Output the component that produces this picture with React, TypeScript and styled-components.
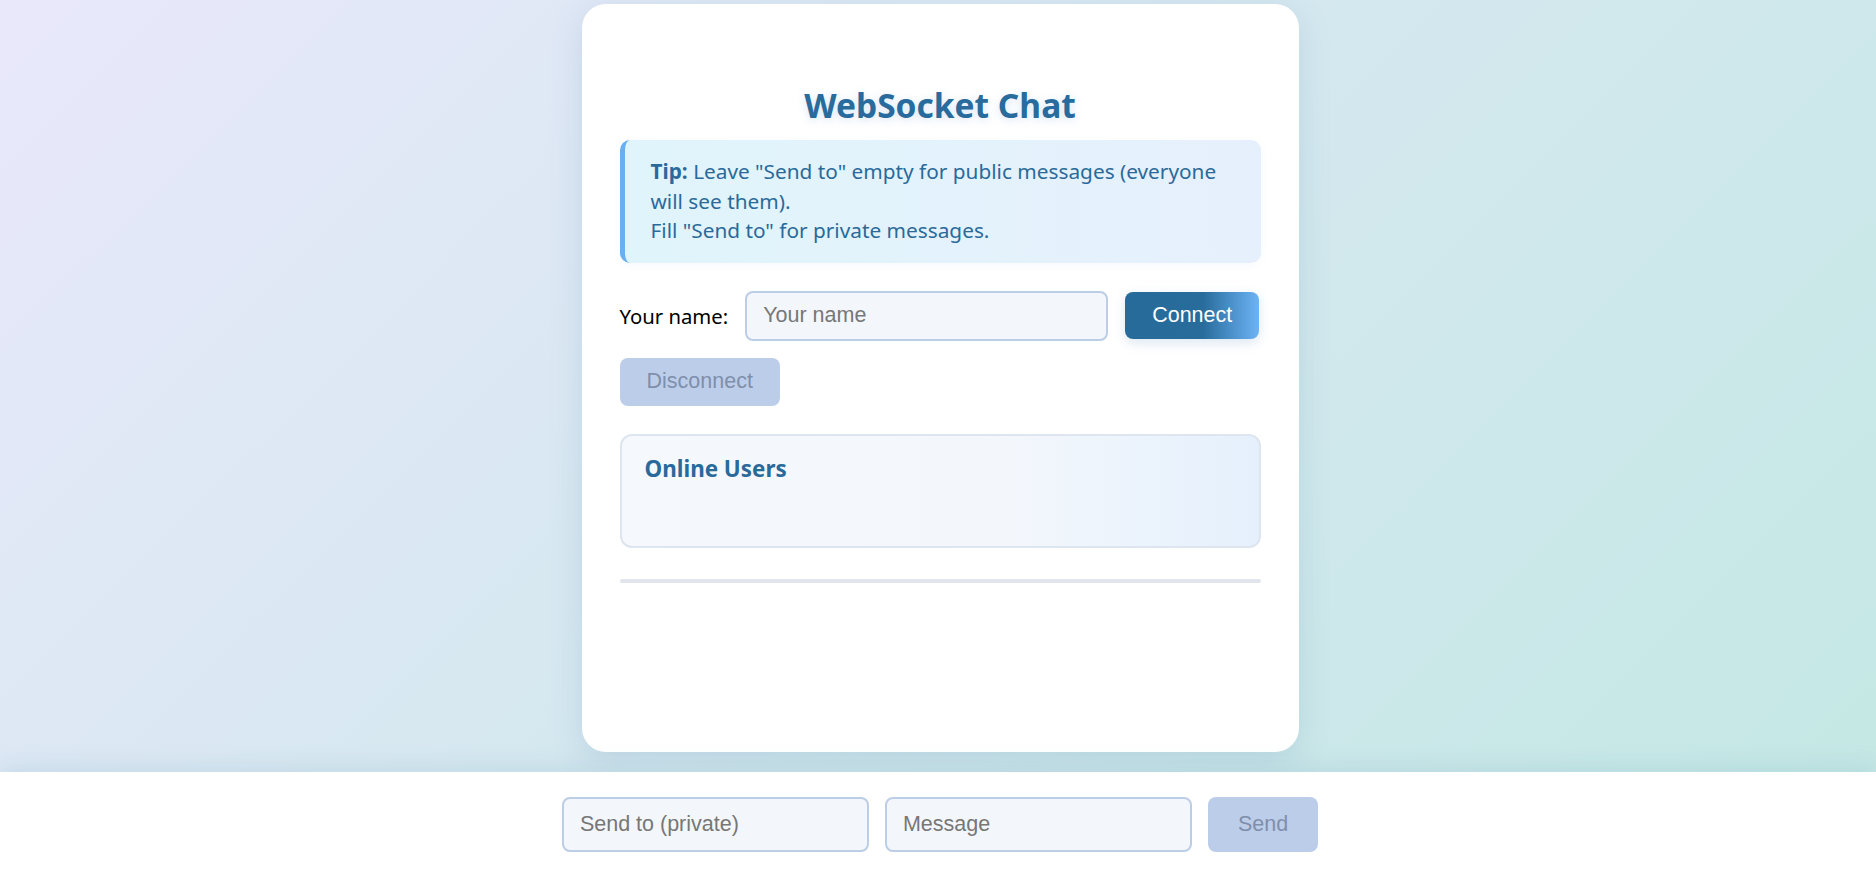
import React from "react";
import styled, { createGlobalStyle } from "styled-components";

const GlobalStyle = createGlobalStyle`
  * { box-sizing: border-box; }
  html, body { margin: 0; padding: 0; height: 100%; }
  body {
    font-family: "Segoe UI", "Noto Sans", sans-serif;
    background: linear-gradient(135deg, #e9e8fb 0%, #d6e8f0 45%, #c3e8e4 100%);
    overflow: hidden;
  }
  #root { height: 100%; }
`;

const Page = styled.div`
  height: 100vh;
  display: flex;
  flex-direction: column;
`;

const Main = styled.main`
  flex: 1;
  display: flex;
  justify-content: center;
  padding: 4px 0 20px 4px;
  min-height: 0;
`;

const Card = styled.section`
  width: 717px;
  background: #fff;
  border-radius: 24px;
  box-shadow: 0 8px 32px rgba(80, 130, 170, 0.18);
  padding: 0 38px;
  display: flex;
  flex-direction: column;
`;

const Title = styled.h1`
  margin: 82px 0 16px;
  text-align: center;
  font-family: "Segoe UI", "Noto Sans", sans-serif;
  font-weight: 700;
  font-size: 33.5px;
  line-height: 38px;
  color: #286b9c;
  text-shadow: 0 2px 8px rgba(100, 150, 220, 0.25);
`;

const Tip = styled.div`
  background: linear-gradient(90deg, #e0f4fb 0%, #e6f0fc 100%);
  border-left: 5px solid #6ab0f0;
  border-radius: 10px;
  padding: 17px 20px 17px 26px;
  color: #2a6a9a;
  font-size: 20.8px;
  line-height: 29.5px;
  box-shadow: 0 2px 8px rgba(100, 150, 200, 0.06);

  strong { font-weight: 700; }
`;

const Controls = styled.div`
  margin-top: 28px;
  display: flex;
  flex-wrap: wrap;
  align-items: center;
  column-gap: 17px;
  row-gap: 17px;
`;

const Label = styled.label`
  font-family: "Segoe UI", "Noto Sans", sans-serif;
  font-size: 20.3px;
  color: #000;
`;

const Input = styled.input<{ $w: number; $h: number }>`
  width: ${(p) => p.$w}px;
  height: ${(p) => p.$h}px;
  border: 2px solid #bccde6;
  border-radius: 8px;
  background: #f3f6fb;
  padding: 0 16px;
  font-family: "Liberation Sans", Arial, sans-serif;
  font-size: 21.5px;
  color: #333;
  outline: none;
  &::placeholder { color: #777; }
`;

const Button = styled.button<{ $primary?: boolean; $h: number; $px?: number }>`
  height: ${(p) => p.$h}px;
  padding: 0 ${(p) => p.$px ?? 27}px;
  border: none;
  border-radius: 8px;
  font-family: "Liberation Sans", Arial, sans-serif;
  font-size: 21.5px;
  cursor: pointer;
  color: ${(p) => (p.$primary ? "#ffffff" : "#7f8fab")};
  background: ${(p) =>
    p.$primary
      ? "linear-gradient(90deg, #276b9b 0%, #286c9c 58%, #6db3f5 100%)"
      : "#bccdea"};
  box-shadow: ${(p) => (p.$primary ? "0 4px 12px rgba(60, 120, 180, 0.18)" : "none")};
`;

const Users = styled.div`
  margin-top: 28px;
  height: 114px;
  border: 2px solid #dde5ef;
  border-radius: 12px;
  background: linear-gradient(90deg, #f5f8fc 0%, #f3f7fc 60%, #e5f0fc 100%);
  padding: 18px 23px;
`;

const UsersTitle = styled.h3`
  margin: 0;
  font-size: 22.4px;
  line-height: 30px;
  font-weight: 700;
  color: #2a6a9a;
`;

const Divider = styled.hr`
  margin: 31px 0 0;
  border: none;
  height: 4px;
  border-radius: 2px;
  background: #e1e6ec;
`;

const BottomBar = styled.footer`
  height: 106px;
  flex-shrink: 0;
  background: #fff;
  box-shadow: 0 -6px 20px rgba(110, 160, 190, 0.18);
  display: flex;
  justify-content: center;
  align-items: flex-start;
  gap: 16px;
  padding: 25px 0 0 4px;
`;

export default function App() {
  return (
    <>
      <GlobalStyle />
      <Page>
        <Main>
          <Card>
            <Title>WebSocket Chat</Title>
            <Tip>
              <strong>Tip:</strong> Leave "Send to" empty for public messages (everyone
              <br />
              will see them).
              <br />
              Fill "Send to" for private messages.
            </Tip>
            <Controls>
              <Label>Your name:</Label>
              <Input $w={363} $h={50} placeholder="Your name" />
              <Button $primary $h={47}>Connect</Button>
              <Button $h={48} disabled>Disconnect</Button>
            </Controls>
            <Users>
              <UsersTitle>Online Users</UsersTitle>
            </Users>
            <Divider />
          </Card>
        </Main>
        <BottomBar>
          <Input $w={307} $h={55} placeholder="Send to (private)" />
          <Input $w={307} $h={55} placeholder="Message" />
          <Button $h={55} $px={30} disabled>Send</Button>
        </BottomBar>
      </Page>
    </>
  );
}
